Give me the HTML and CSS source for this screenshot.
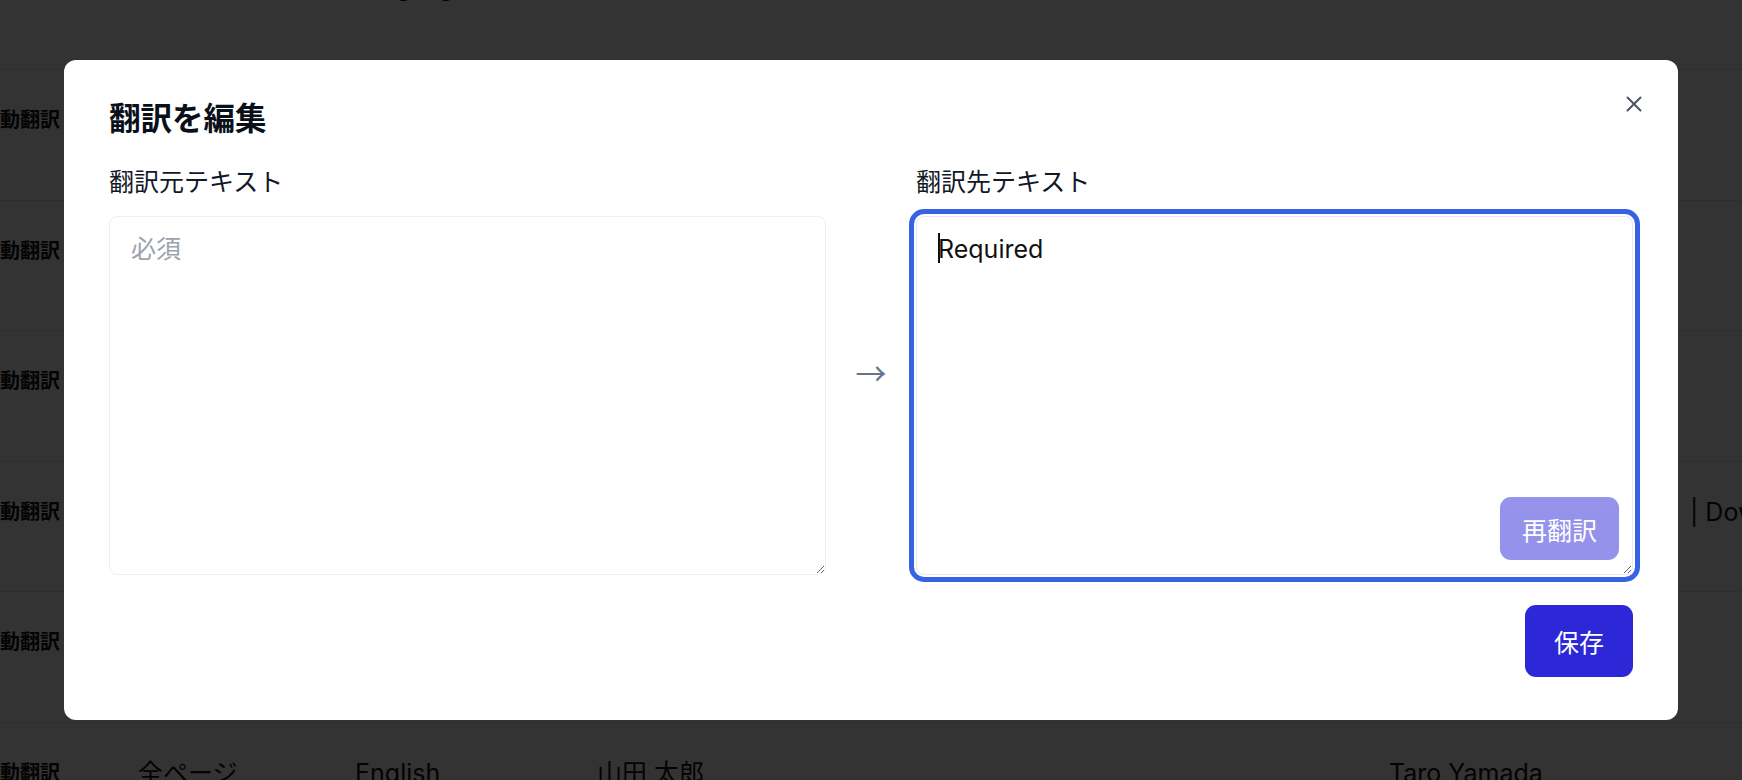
FILE: index.html
```html
<!DOCTYPE html>
<html lang="ja">
<head>
<meta charset="utf-8">
<title>翻訳を編集</title>
<link rel="stylesheet" href="styles.css">
</head>
<body>
<div class="page">
  <div class="thead">
    <span class="th th-lang">Language</span>
  </div>
  <div class="row"><span class="badge">自動翻訳</span><span>全ページ</span><span>English</span><span>山田 太郎</span><span>Taro Yamada</span><span></span></div>
  <div class="row"><span class="badge">自動翻訳</span><span>全ページ</span><span>English</span><span>山田 太郎</span><span>Taro Yamada</span><span></span></div>
  <div class="row"><span class="badge">自動翻訳</span><span>全ページ</span><span>English</span><span>山田 太郎</span><span>Taro Yamada</span><span></span></div>
  <div class="row"><span class="badge">自動翻訳</span><span>全ページ</span><span>English</span><span>山田 太郎</span><span>Taro Yamada</span><span class="sep">| Download</span></div>
  <div class="row"><span class="badge">自動翻訳</span><span>全ページ</span><span>English</span><span>山田 太郎</span><span>Taro Yamada</span><span></span></div>
  <div class="row"><span class="badge">自動翻訳</span><span>全ページ</span><span>English</span><span>山田 太郎</span><span>Taro Yamada</span><span></span></div>
</div>

<div class="overlay">
  <div class="modal">
    <button class="close" aria-label="閉じる">
      <svg width="16" height="16" viewBox="0 0 16 16" fill="none" stroke="#4b5563" stroke-width="2" stroke-linecap="round">
        <path d="M1.5 1.5 L14.5 14.5 M14.5 1.5 L1.5 14.5"/>
      </svg>
    </button>
    <h2 class="title">翻訳を編集</h2>
    <div class="fields">
      <div class="field">
        <label class="label">翻訳元テキスト</label>
        <textarea class="input" placeholder="必須"></textarea>
      </div>
      <div class="arrow">→</div>
      <div class="field">
        <label class="label">翻訳先テキスト</label>
        <div class="input-wrap">
          <textarea class="input input-focus">Required</textarea>
          <span class="caret"></span>
          <button class="retranslate">再翻訳</button>
        </div>
      </div>
    </div>
    <div class="footer">
      <button class="save">保存</button>
    </div>
  </div>
</div>
</body>
</html>
```

FILE: styles.css
```css
* { box-sizing: border-box; }

html, body {
  margin: 0;
  height: 100%;
  overflow: hidden;
}

body {
  font-family: Inter, "Noto Sans CJK JP", sans-serif;
  color: #111827;
  background: #ffffff;
}

/* ---------- background page ---------- */
.page {
  margin-left: -20px;
  width: 1800px;
}

.thead {
  height: 70px;
  border-bottom: 1px solid #e5e7eb;
  display: grid;
  grid-template-columns: 375px 1fr;
}

.th {
  grid-column: 2;
  font-size: 24px;
  line-height: 30px;
  margin-top: -27px;
  color: #111;
}

.row {
  height: 130.5px;
  border-bottom: 1px solid #e5e7eb;
  display: grid;
  grid-template-columns: 158px 217px 242px 792px 301px 1fr;
  align-items: start;
  padding-top: 32px;
  font-size: 25px;
  line-height: 36px;
  color: #111;
  white-space: nowrap;
}

.badge {
  font-size: 20px;
  font-weight: 700;
}

/* ---------- overlay & modal ---------- */
.overlay {
  position: fixed;
  inset: 0;
  background: rgba(0, 0, 0, 0.8);
  display: flex;
  align-items: center;
  justify-content: center;
}

.modal {
  position: relative;
  width: 1614px;
  background: #ffffff;
  border-radius: 12px;
  padding: 41px 45px 43px 45px;
  display: flex;
  flex-direction: column;
}

.close {
  position: absolute;
  top: 36px;
  right: 36px;
  width: 16px;
  height: 16px;
  padding: 0;
  border: 0;
  background: transparent;
  display: flex;
}

.title {
  margin: 0;
  font-size: 31.5px;
  line-height: 36px;
  font-weight: 700;
  color: #0b0f1a;
}

.fields {
  margin-top: 27px;
  display: flex;
  align-items: center;
}

.field {
  flex: 1 1 0;
  display: flex;
  flex-direction: column;
  gap: 16px;
}

.label {
  font-size: 25px;
  line-height: 36px;
  color: #111827;
}

.arrow {
  width: 90px;
  flex: none;
  text-align: center;
  font-family: "Noto Sans CJK JP", sans-serif;
  font-size: 31px;
  line-height: 36px;
  color: #64748b;
  padding-top: 4px;
}

.input-wrap {
  position: relative;
  display: flex;
}

.input {
  width: 100%;
  height: 359px;
  border: 1px solid #eeeff2;
  border-radius: 8px;
  padding: 14px 21px;
  font-family: Inter, "Noto Sans CJK JP", sans-serif;
  font-size: 25px;
  line-height: 36px;
  color: #111;
  background: #fff;
  outline: none;
  display: block;
}

.input::placeholder {
  color: #9ca3af;
}

.input-focus {
  border-color: #e7e8f0;
  box-shadow: 0 0 0 2px #ffffff, 0 0 0 7px #3563e3;
}

.caret {
  position: absolute;
  left: 22px;
  top: 17px;
  width: 2px;
  height: 30px;
  background: #111;
}

.retranslate {
  position: absolute;
  right: 14px;
  bottom: 15px;
  border: 0;
  border-radius: 11px;
  padding: 13.5px 22px;
  font-family: "Noto Sans CJK JP", sans-serif;
  font-size: 25px;
  line-height: 36px;
  color: #fff;
  background: #2c27d7;
  opacity: 0.5;
}

.footer {
  margin-top: 30px;
  display: flex;
  justify-content: flex-end;
}

.save {
  border: 0;
  border-radius: 11px;
  padding: 18px 29px;
  font-family: "Noto Sans CJK JP", sans-serif;
  font-size: 25px;
  line-height: 36px;
  color: #fff;
  background: #2c27d7;
}
```
